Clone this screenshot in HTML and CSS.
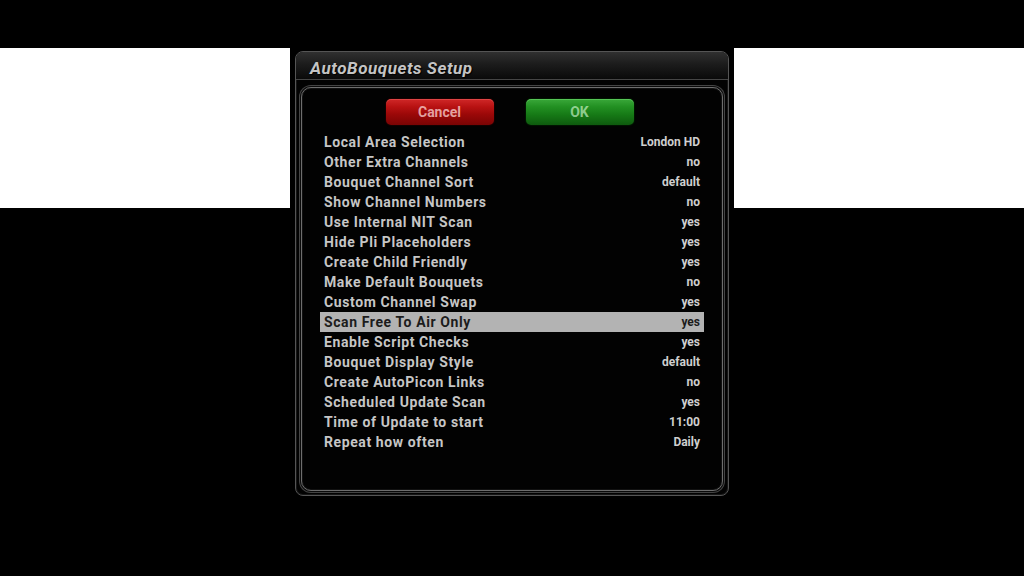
FILE: index.html
```html
<!DOCTYPE html>
<html>
<head>
<meta charset="utf-8">
<link rel="stylesheet" href="styles.css">
</head>
<body>
<div class="band"></div>
<div class="screen">
  <div class="window">
    <div class="titlebar">AutoBouquets Setup</div>
    <div class="frame">
      <div class="buttons">
        <div class="btn btn-red">Cancel</div>
        <div class="btn btn-green">OK</div>
      </div>
      <ul class="list">
        <li class="row"><span class="label">Local Area Selection</span><span class="value">London HD</span></li>
        <li class="row"><span class="label">Other Extra Channels</span><span class="value">no</span></li>
        <li class="row"><span class="label">Bouquet Channel Sort</span><span class="value">default</span></li>
        <li class="row"><span class="label">Show Channel Numbers</span><span class="value">no</span></li>
        <li class="row"><span class="label">Use Internal NIT Scan</span><span class="value">yes</span></li>
        <li class="row"><span class="label">Hide Pli Placeholders</span><span class="value">yes</span></li>
        <li class="row"><span class="label">Create Child Friendly</span><span class="value">yes</span></li>
        <li class="row"><span class="label">Make Default Bouquets</span><span class="value">no</span></li>
        <li class="row"><span class="label">Custom Channel Swap</span><span class="value">yes</span></li>
        <li class="row selected"><span class="label">Scan Free To Air Only</span><span class="value">yes</span></li>
        <li class="row"><span class="label">Enable Script Checks</span><span class="value">yes</span></li>
        <li class="row"><span class="label">Bouquet Display Style</span><span class="value">default</span></li>
        <li class="row"><span class="label">Create AutoPicon Links</span><span class="value">no</span></li>
        <li class="row"><span class="label">Scheduled Update Scan</span><span class="value">yes</span></li>
        <li class="row"><span class="label">Time of Update to start</span><span class="value">11:00</span></li>
        <li class="row"><span class="label">Repeat how often</span><span class="value">Daily</span></li>
      </ul>
    </div>
  </div>
</div>
</body>
</html>
```
FILE: styles.css
```css
html, body {
  margin: 0;
  padding: 0;
}
body {
  width: 1024px;
  height: 576px;
  background: #000;
  overflow: hidden;
  position: relative;
  font-family: Roboto, "Liberation Sans", sans-serif;
}
.band {
  margin-top: 48px;
  height: 160px;
  background: #fff;
}
.screen {
  position: absolute;
  left: 290px;
  top: 48px;
  width: 444px;
  height: 528px;
  background: #000;
  padding: 3px 0 0 5px;
  box-sizing: border-box;
}
.window {
  width: 434px;
  height: 445px;
  box-sizing: border-box;
  border: 1px solid #555;
  border-radius: 8px;
  background: #020202;
  box-shadow: inset 0 0 0 1px #161616;
  display: flex;
  flex-direction: column;
}
.titlebar {
  height: 27px;
  border-bottom: 1px solid #454545;
  border-radius: 7px 7px 0 0;
  background: linear-gradient(#303030, #1c1c1c 45%, #0a0a0a);
  color: #c4c4c4;
  font-weight: bold;
  font-style: italic;
  font-size: 17px;
  letter-spacing: 0.55px;
  line-height: 32px;
  padding-left: 14px;
  text-shadow: 1px 1px 1px #000;
}
.frame {
  margin: 7px 5px 4px 5px;
  flex: 1;
  border: 1px solid #6e6e6e;
  border-radius: 10px;
  box-shadow: 0 0 0 1px #0a0a0a, 0 0 0 2px #444, inset 0 0 0 1px #111;
  padding: 11px 18px 0 18px;
}
.buttons {
  display: flex;
  justify-content: center;
  gap: 32px;
  margin-left: -5px;
  height: 26px;
  margin-bottom: 7px;
}
.btn {
  width: 108px;
  height: 26px;
  border-radius: 5px;
  font-weight: bold;
  font-size: 14px;
  line-height: 27px;
  text-align: center;
  color: rgba(255, 255, 255, 0.62);
}
.btn-red {
  background: linear-gradient(#d02828 0%, #b81212 30%, #9a0808 60%, #7a0404 100%);
  box-shadow: inset 0 1px 0 rgba(255, 120, 120, 0.35), 0 0 2px #400;
  color: rgba(255, 220, 220, 0.72);
}
.btn-green {
  background: linear-gradient(#3aa83a 0%, #229022 30%, #167a16 60%, #0e5a0e 100%);
  box-shadow: inset 0 1px 0 rgba(140, 255, 140, 0.35), 0 0 2px #040;
  color: rgba(220, 255, 220, 0.62);
}
.list {
  list-style: none;
  margin: 0;
  padding: 0;
}
.row {
  height: 20px;
  display: flex;
  justify-content: space-between;
  align-items: center;
  padding: 0 4px;
  color: #c6c6c6;
}
.label {
  font-weight: bold;
  font-size: 14px;
  letter-spacing: 0.6px;
}
.value {
  font-weight: bold;
  font-size: 12px;
  color: #cfcfcf;
}
.row.selected {
  background: #b3b3b3;
}
.row.selected .label,
.row.selected .value {
  color: #1c1c1c;
}
```
